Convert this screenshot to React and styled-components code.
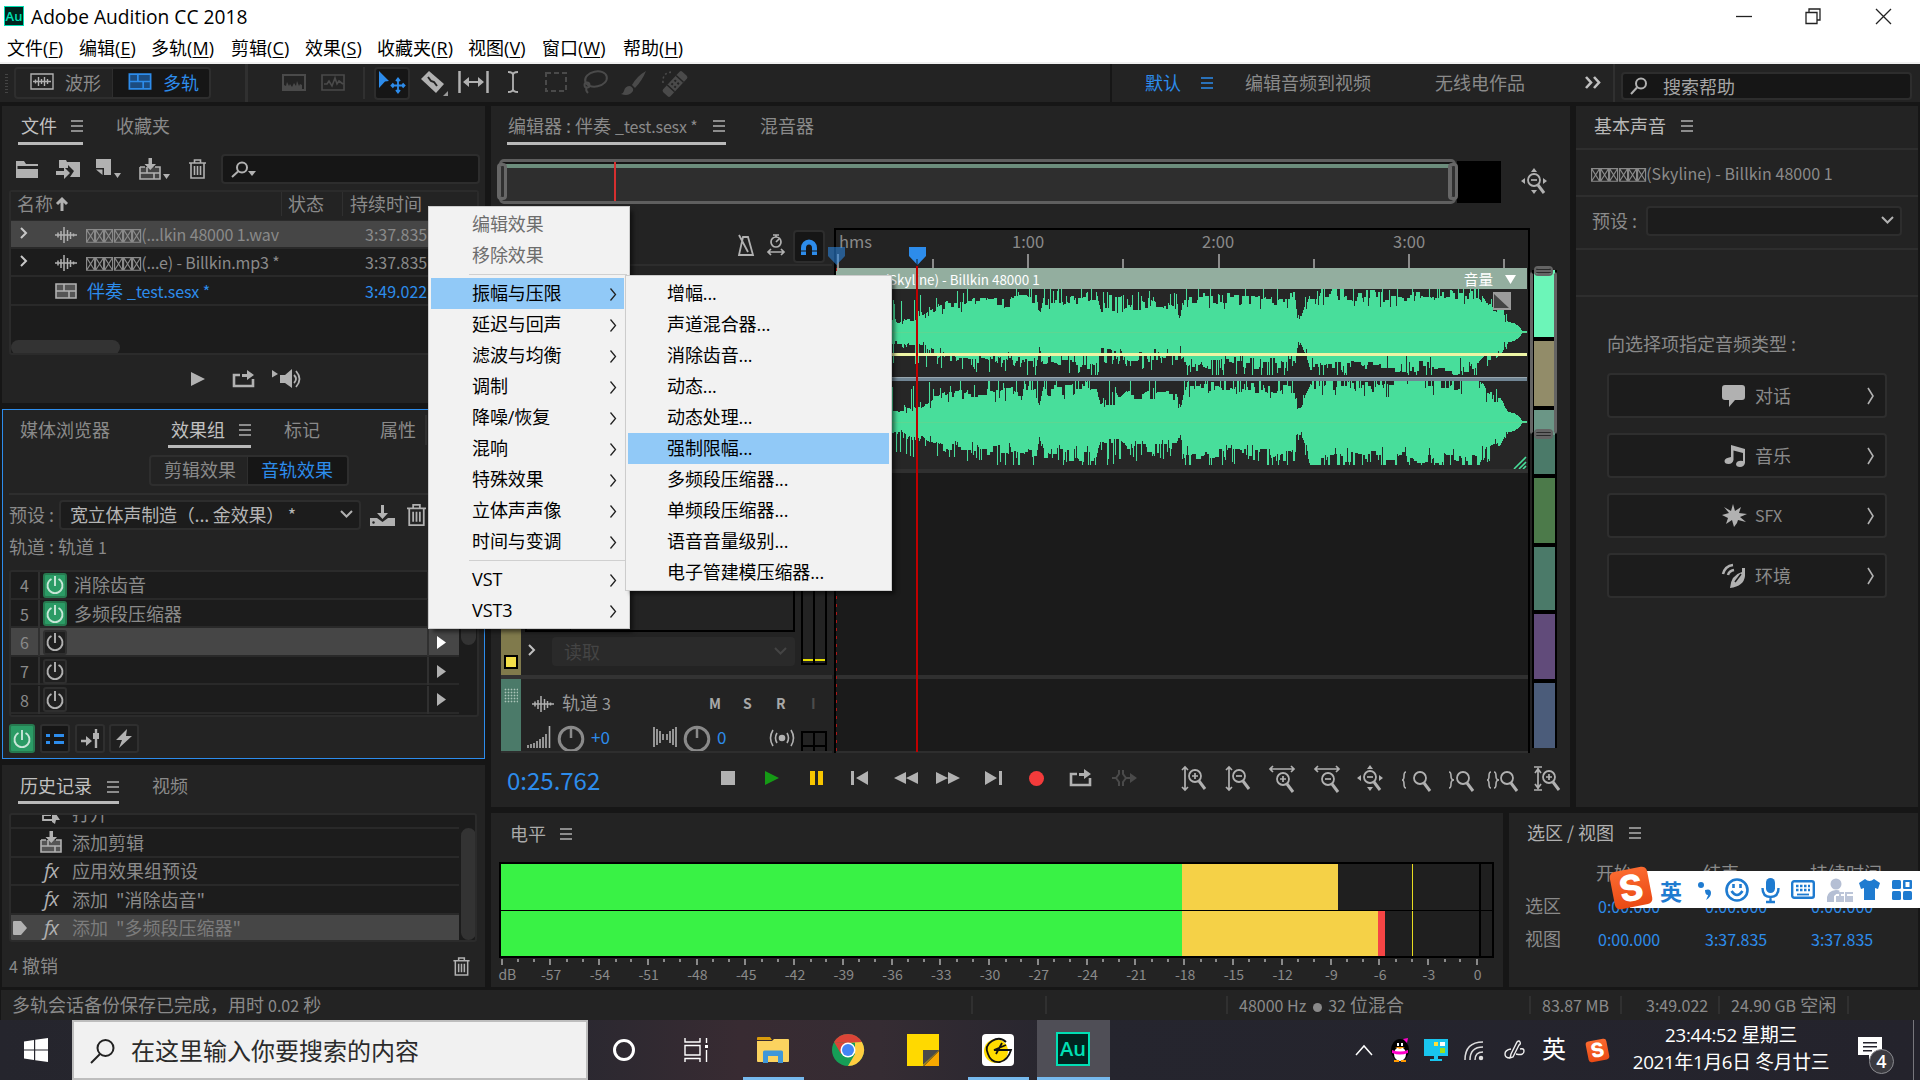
import React from 'react';
import styled, { createGlobalStyle, css } from 'styled-components';

const UI = '"Noto Sans CJK SC", sans-serif';
const WIN = '"Open Sans", "Noto Sans CJK SC", sans-serif';
const blue = '#2d8ceb';
const grey = '#8a8a8a';
const icon = '#b1b1b1';

const Global = createGlobalStyle`
  * { box-sizing: border-box; }
  html, body { margin: 0; padding: 0; background: #161616; overflow: hidden; }
  svg { display: block; flex: none; overflow: visible; }
`;

/* ---------- layout primitives ---------- */
const Screen = styled.div`
  width: 1920px; height: 1080px; position: relative; overflow: hidden;
  display: flex; flex-direction: column; background: #161616;
  font-family: ${UI}; font-size: 18px; line-height: 24px; color: ${grey}; white-space: nowrap;
`;
const columns = (xs) => xs.slice(1).map((x, i) => `${x - xs[i]}px`).concat('1fr').join(' ');
const Strip = styled.div`
  display: grid; align-items: center; flex: none;
  grid-template-columns: ${(p) => columns(p.$xs)};
  padding-left: ${(p) => p.$xs[0] - (p.$x0 || 0)}px;
  height: ${(p) => p.$h}px;
  margin-top: ${(p) => p.$mt || 0}px;
  & > * { min-width: 0; }
`;
const Gap = styled.div`height: ${(p) => p.$h}px; flex: none;`;
const Label = styled.span`
  color: ${(p) => p.$c || 'inherit'}; width: 0; overflow: visible;
  font-size: ${(p) => (p.$s ? `${p.$s}px` : 'inherit')};
  margin-left: -1px; margin-top: ${(p) => ((p.$dy || 0) - 1) * 2}px;
`;
const Latin = styled.span`font-size: ${(p) => p.$s || 16}px; letter-spacing: ${(p) => p.$ls || 0}px;`;
const Main = styled.div`display: flex; flex: none; height: 881px; padding: 0 2px; gap: 6px; margin-top: 4px;`;
const Column = styled.div`display: flex; flex-direction: column; gap: 6px; width: ${(p) => p.$w}px; flex: none;`;
const Line = styled.div`display: flex; gap: 6px; flex: none;`;
const Panel = styled.section`
  background: #232323; width: ${(p) => p.$w}px; height: ${(p) => p.$h}px; flex: none;
  display: flex; flex-direction: column; overflow: hidden;
  ${(p) => p.$active && css`box-shadow: inset 0 0 0 1px ${blue};`}
`;
const Rule = styled.div`height: 2px; background: #2e2e2e; flex: none; margin: ${(p) => p.$m || 0};`;
const Underline = styled.div`height: 3px; flex: none; background: #b9b9b9; width: ${(p) => p.$w}px; margin: ${(p) => p.$m};`;
const VRule = styled.i`display: block; width: ${(p) => p.$w || 2}px; height: ${(p) => p.$h || 18}px; background: ${(p) => p.$c || '#303030'};`;
const BoxBase = css`background: #161616; border: 2px solid #2d2d2d; border-radius: 4px;`;

/* ---------- small drawings ---------- */
const Svg = ({ w, h, c = icon, dy = 0, fill = 'none', sw = 2, children }) => (
  <svg width={w} height={h} viewBox={`0 0 ${w} ${h}`} fill={fill} stroke={fill === 'none' ? c : 'none'} color={c}
    strokeWidth={sw} transform={`translate(0 ${dy})`}>{children}</svg>
);
const Burger = ({ c = '#b0b0b0' }) => <Svg w={12} h={12} c={c} sw={1.6}><path d="M0 1h12M0 6h12M0 11h12" /></Svg>;
const Chevron = ({ c = icon, dy = 0 }) => <Svg w={8} h={12} c={c} dy={dy}><path d="M1 1l5 5-5 5" /></Svg>;
const Down = ({ c = icon }) => <Svg w={13} h={8} c={c}><path d="M1 1l5.5 5.5L12 1" /></Svg>;
const WaveIcon = () => <Svg w={22} h={16} sw={1.5} dy={1}><path d="M0 8h22M3 5.500v5M6 4v9M9 0v16M12.500 3v11M15.500 5v7M18.500 6.500v3" /></Svg>;
const Trash = ({ w = 17, h = 20 }) => (
  <svg width={w} height={h} viewBox="0 0 17 20" fill="none" stroke={icon} strokeWidth="1.6">
    <path d="M0 4h17M5.5 4V1h6v3M2 4v15h13V4M5.5 7v9M8.5 7v9M11.5 7v9" />
  </svg>
);
const Play = ({ c = icon, w = 14, h = 14 }) => <svg width={w} height={h} viewBox="0 0 14 14" preserveAspectRatio="none" fill={c}><path d="M0 0l14 7-14 7z" /></svg>;
const Loop = () => <Svg w={22} h={18}><path d="M7 5H1v11h19V9" strokeWidth="2.6" /><path d="M9 4h5V0l7 5-7 5V7H9z" fill={icon} stroke="none" /></Svg>;
const Grid = ({ c = icon, w = 22, h = 16, bg = '#555' }) => (
  <svg width={w} height={h} viewBox="0 0 22 16" fill={bg} stroke={c} strokeWidth="1.6"><path d="M1 1h20v14H1zM1 8h20M9 1v7M14 8v7" /></svg>
);
const AddClip = () => (
  <Svg w={22} h={22} sw={1.6}><path d="M1 9v12h20V9h-5M6 9H1M1 15h20M8 9v6M15 15v6" fill="#555" /><path d="M9.5 0h3.5v6h4l-5.7 6-5.8-6h4z" fill={icon} stroke="none" /></Svg>
);
const Power = ({ c = icon }) => <Svg w={18} h={20} c={c} sw={1.9}><path d="M5.5 4a7.5 7.5 0 1 0 7 0M9 1v10" /></Svg>;
const Mag = ({ c = icon, w = 18, h = 18 }) => (
  <svg width={w} height={h} viewBox="0 0 18 18" fill="none" stroke={c} strokeWidth="2"><circle cx="11" cy="6.5" r="5" /><path d="M7 10.5L1 17" /></svg>
);
const ZoomGlyph = ({ x = 0, y = 0, sign }) => (
  <g transform={`translate(${x} ${y})`}><circle cx="7" cy="8" r="6" strokeWidth="1.8" /><path d="M11 13l6 8" strokeWidth="3" />
    {sign && <path d={sign === '+' ? 'M4 8h6M7 5v6' : 'M4 8h6'} strokeWidth="1.7" />}</g>
);
const ZoomAll = () => (
  <Svg w={26} h={26}><ZoomGlyph x={6} y={4} sign="-" /><path d="M13 0l3 4h-6zM13 26l3-4h-6zM0 13l4-3v6zM26 13l-4-3v6z" fill={icon} stroke="none" /></Svg>
);
const Boxed = styled.span`display: inline-flex; gap: 0; vertical-align: -2px;`;
const Tofu = ({ c = 'currentColor', n = 6, w = 9.2, h = 14 }) => (
  <Boxed>{Array.from({ length: n }, (_, i) => (
    <svg key={i} width={w} height={h} viewBox="0 0 9.2 14" preserveAspectRatio="none" fill="none" stroke={c} strokeWidth="1.15"><path d="M.6.6h8v12.6h-8zM.6.6l8 12.6M8.6.6l-8 12.6" /></svg>
  ))}</Boxed>
);

/* ---------- window chrome ---------- */
const TitleBar = styled(Strip)`background: #fff; color: #000; font-family: ${WIN}; font-size: 19.2px;`;
const MenuBar = styled(Strip)`background: #fff; color: #000; font-family: ${WIN}; font-size: 18px; border-bottom: 2px solid #f0f0f0;`;
const MenuLatin = styled.span`font-size: 18px; letter-spacing: 0.1px; u { text-underline-offset: 2px; text-decoration-thickness: 1px; }`;
const AuBadge = styled.div`
  width: ${(p) => p.$s}px; height: ${(p) => p.$s}px; background: #00241f; border: ${(p) => p.$b}px solid #00e0b4; color: #00e0b4;
  font: 600 ${(p) => p.$f}px/1 ${WIN}; display: flex; align-items: center; justify-content: center; margin-left: ${(p) => p.$ml || 0}px; margin-top: ${(p) => p.$mt || 0}px;
`;
const menus = [['文件', 'F'], ['编辑', 'E'], ['多轨', 'M'], ['剪辑', 'C'], ['效果', 'S'], ['收藏夹', 'R'], ['视图', 'V'], ['窗口', 'W'], ['帮助', 'H']];

/* ---------- tool bar ---------- */
const ToolBar = styled.div`display: flex; background: #232323; height: 38px; flex: none; align-items: center;`;
const Grip = styled.div`width: 3px; height: 19px; margin-left: 5px; background: repeating-linear-gradient(#444 0 1px, transparent 1px 3px);`;
const Toggle = styled.div`display: flex; height: ${(p) => p.$h}px; border: 2px solid #2e2e2e; border-radius: 4px; margin-left: ${(p) => p.$ml}px; width: ${(p) => p.$w}px; overflow: hidden; flex: none;`;
const ToggleItem = styled.div`
  flex: none; width: ${(p) => p.$w}px; padding: 0 0 3px ${(p) => p.$pl}px; display: flex; align-items: center; gap: 11px;
  color: ${(p) => (p.$on ? blue : grey)}; background: ${(p) => (p.$on ? '#161616' : 'transparent')};
  border-left: ${(p) => (p.$on ? '1px solid #2e2e2e' : 'none')};
`;
const ToolSlot = styled.div`
  width: ${(p) => p.$w}px; height: ${(p) => p.$h || 33}px; margin-left: ${(p) => p.$ml || 0}px; display: flex; align-items: center; justify-content: center; flex: none;
  ${(p) => p.$on && BoxBase}
`;
const HelpSearch = styled.div`${BoxBase} width: 291px; height: 28px; margin: 5px 0 0 6px; display: flex; align-items: center; gap: 15px; padding-left: 7px; color: #a5a5a5;`;
const off = '#4a4a4a';

/* ---------- left panels ---------- */
const FindBox = styled.div`${BoxBase} width: 259px; height: 30px; padding: 5px 0 0 8px;`;
const Table = styled.div`
  margin-left: ${(p) => p.$ml}px; width: ${(p) => p.$w}px; height: ${(p) => p.$h}px; background: #1c1c1c; border: 2px solid #2b2b2b; border-radius: 3px;
  display: flex; flex-direction: column; overflow: hidden; flex: none; position: relative;
`;
const FileHead = styled(Strip)`background: #232323; border-bottom: 1px solid #2b2b2b; padding-bottom: 4px;`;
const Row = styled(Strip)`
  background: ${(p) => (p.$on ? '#464646' : 'transparent')}; border-bottom: 2px solid #292929; color: ${(p) => p.$c || grey};
`;
const Thumb = styled.div`background: #333; border-radius: 8px; width: ${(p) => p.$w}px; height: ${(p) => p.$h}px; margin: ${(p) => p.$m || 0}; flex: none;`;
const Preset = styled.div`${BoxBase} background: #1c1c1c; width: ${(p) => p.$w}px; height: 30px; display: flex; align-items: center; justify-content: space-between; padding: 0 6px 3px 9px; color: ${(p) => p.$c || '#b5b5b5'}; letter-spacing: -0.2px;`;
const Scroller = styled.div`display: flex; height: 100%;`;
const Rows = styled.div`width: 448px; flex: none; overflow: hidden; margin-top: ${(p) => p.$mt || 0}px;`;
const Rack = styled(Row)`border-bottom: none; box-shadow: inset 0 -2px #292929;`;
const PowerBox = styled.div`
  width: ${(p) => p.$w || 24}px; height: ${(p) => p.$h || 25}px; border-radius: 3px; display: flex; align-items: center; justify-content: center;
  background: ${(p) => (p.$on ? '#2b9b65' : p.$dark ? '#161616' : '#1f1f1f')}; border: 2px solid ${(p) => (p.$on ? '#26794f' : '#2f2f2f')};
`;
const Fx = styled.span`font: italic 20px/22px "Open Sans", sans-serif; color: ${icon}; letter-spacing: -1px; width: 0;`;

/* ---------- editor ---------- */
const Overview = styled.div`
  position: relative; display: flex; align-items: center; width: 1005px; height: 46px; margin: 13px 0 0 6px; flex: none;
`;
const OverviewFrame = styled.div`flex: none; width: 957px; height: 45px; margin-left: -8px; border: 3px solid #5f5f5f; border-radius: 5px; background: linear-gradient(#161616 0 2px, #6c8d7c 2px 6px, #2e2e2e 6px);`;
const Handle = styled.div`flex: none; width: 10px; height: 37px; background: #303030; border: 3px solid #676767; border-radius: 4px; margin-left: ${(p) => p.$ml}px; box-shadow: inset 1px 0 #676767; z-index: 1;`;
const BlackEnd = styled.div`width: 44px; height: 42px; background: #000; margin-left: -1px; flex: none;`;
const OverviewHead = styled.i`position: absolute; left: 117px; top: 3px; width: 2px; height: 39px; background: #d62f2f;`;
const ZoomCell = styled.div`padding-top: 11px;`;
const EditorGrid = styled.div`display: grid; grid-template-columns: 10px 333px 696px 40px; height: 525px; flex: none; margin-top: 23px; position: relative;`;
const Headers = styled.div`grid-column: 2; display: flex; flex-direction: column; background: #232323; padding-right: 2px; overflow: hidden;`;
const TrackHead = styled.div`display: flex; height: ${(p) => p.$h}px; margin-bottom: ${(p) => p.$mb || 0}px; flex: none; overflow: hidden; border-top: ${(p) => p.$bt || 0}px solid #333;`;
const TrackTag = styled.div`width: 20px; background: ${(p) => p.$c}; flex: none; display: flex; flex-direction: column; align-items: center; justify-content: ${(p) => p.$j || 'flex-start'}; padding: ${(p) => p.$p || 0};`;
const Swatch = styled.i`width: 14px; height: 14px; background: #f3df49; border: 2px solid #000;`;
const Dots = styled.i`width: 14px; height: 15px; background: radial-gradient(#aac4b8 40%, transparent 50%) 0 0 / 3px 3px;`;
const TrackBody = styled.div`width: 280px; display: flex; flex-direction: column; flex: none;`;
const SendBox = styled.div`width: 270px; height: ${(p) => p.$h}px; margin-left: 4px; border: 2px solid #000; flex: none; background: linear-gradient(90deg, transparent 43px, #000 43px 44px, transparent 44px);`;
const ReadBox = styled.div`width: 243px; height: 29px; background: #2a2a2a; border-radius: 4px; color: #444; display: flex; justify-content: space-between; align-items: center; padding: 0 8px 0 12px;`;
const Meter = styled.div`
  width: 26px; height: ${(p) => p.$h}px; margin-top: ${(p) => p.$mt}px; border: 2px solid #000; flex: none; display: flex; flex-direction: column; justify-content: flex-end;
  background: linear-gradient(90deg, transparent 10px, #000 10px 12px, transparent 12px);
  &::after { content: ''; display: block; height: 2px; margin-bottom: ${(p) => (p.$lit ? 2 : 6)}px; background: ${(p) => (p.$lit ? 'linear-gradient(90deg, #e8e000 10px, #000 10px 12px, #e8e000 12px)' : '#000')}; }
`;
const Lanes = styled.div`grid-column: 3; display: flex; flex-direction: column; border-left: 2px solid #000; border-right: 2px solid #000; background: #1b1b1b;`;
const Ruler = styled.div`height: 40px; background: #232323; border-top: 2px solid #000; flex: none;`;
const ClipBar = styled.div`height: 21px; background: #93ae9f; color: #fff; flex: none; display: flex; align-items: center; justify-content: space-between; padding: 0 11px 0 3px; font-size: 14.6px; margin-right: 1px;`;
const ClipName = styled.span`font-size: 13.4px; padding-top: 1px;`;
const VolTag = styled.span`display: flex; align-items: center; gap: 12px; padding-top: 1px;`;
const Clip = styled.div`height: 180px; background: #262626; flex: none;`;
const Lane = styled.div`height: ${(p) => p.$h}px; border-top: 4px solid #303030; flex: none;`;
const MapCol = styled.div`grid-column: 4; position: relative; padding: 42px 0 0 2px;`;
const MapTrack = styled.div`width: 25px; background: #000; padding: 0 2px; display: flex; flex-direction: column; gap: 4px;`;
const MapSeg = styled.i`height: ${(p) => p.$h}px; background: ${(p) => p.$c}; display: block;`;
const MapFrame = styled.div`position: absolute; left: 0; top: 43px; width: 27px; height: 164px; border: 3px solid #646464; border-top-color: transparent; border-bottom-color: transparent; border-radius: 4px;`;
const MapCap = styled.i`position: absolute; left: 4px; top: ${(p) => p.$t}px; width: 19px; height: 10px; background: linear-gradient(transparent 1px, #2a2a2a 1px 2px, transparent 2px 4px, #2a2a2a 4px 5px, transparent 5px) #646464; background-clip: padding-box; border: 2px solid #646464; border-radius: 4px;`;
const Playhead = styled.i`position: absolute; left: 425px; top: 38px; width: 2px; height: 486px; background: #c00000; z-index: 2;`;
const StartLine = styled.i`position: absolute; left: 345px; top: 40px; width: 1px; height: 484px; background: repeating-linear-gradient(#b01818 0 3px, transparent 3px 8px);`;
const Marker = styled.svg`position: absolute; left: ${(p) => p.$l}px; top: 19px; opacity: ${(p) => p.$o || 1};`;
const TimeCode = styled.span`font-size: 24px; letter-spacing: 0; color: ${blue}; width: 0; padding-top: 4px;`;
const RulerTools = styled(Strip)`border-bottom: 2px solid #2d2d2d;`;
const MsrLabel = styled.span`font: 600 14px/18px "Noto Sans CJK SC", sans-serif; color: ${(p) => p.$c || '#a8a8a8'}; width: 0;`;

/* ---------- level meter ---------- */
const LevelBox = styled.div`width: 995px; height: 96px; margin: 10px 0 0 8px; border: 2px solid #000; display: flex; flex-direction: column; gap: 1px; background: #000; flex: none;`;
const Level = styled.div`flex: 1; display: flex; background: #1f1f1f;`;
const Bar = styled.i`display: block; width: ${(p) => p.$w}px; background: ${(p) => p.$c}; margin-left: ${(p) => p.$ml || 0}px; flex: none;`;
const Scale = styled.div`display: flex; margin-left: -14px; flex: none;`;
const Mark = styled.div`width: 48.77px; flex: none; text-align: center; font-size: 14px; line-height: 18px; padding: 7px 0 0 ${(p) => (p.$first ? 12 : 2)}px;
  background: linear-gradient(${grey}, ${grey}) 23.5px 1px / 2px 6px no-repeat, ${(p) => (p.$last ? 'none' : `linear-gradient(${grey}, ${grey}) 40px 1px / 2px 3px no-repeat`)}, ${(p) => (p.$first ? 'none' : `linear-gradient(${grey}, ${grey}) 7px 1px / 2px 3px no-repeat`)};`;

/* ---------- right panel ---------- */
const TypeButton = styled.div`
  width: 280px; height: 45px; margin: 0 0 15px 31px; border: 2px solid #2e2e2e; border-radius: 4px; background: #1c1c1c; flex: none;
  display: grid; grid-template-columns: 113px 34px 1fr 18px; align-items: center;
`;
const Figures = styled(Strip)`color: ${blue};`;

/* ---------- status and task bars ---------- */
const StatusBar = styled(Strip)`background: #232323; margin-top: 3px; margin-left: 1px;`;
const Bullet = styled.i`display: inline-block; width: 9px; height: 9px; border-radius: 50%; background: currentColor; margin: 0 6px 0 7px;`;
const TaskBar = styled.div`height: 60px; flex: none; display: flex; background: linear-gradient(90deg, #25252d 0, #292830 560px, #382b32 740px, #352c33 880px, #25252e 1080px, #24232c 100%); color: #fff; font-family: ${WIN};`;
const StartCell = styled.div`width: 72px; display: flex; align-items: center; justify-content: center; flex: none;`;
const SearchBox = styled.div`width: 516px; background: #f1f1f1; border: 2px solid #bdbdbd; display: flex; align-items: center; gap: 17px; padding: 2px 0 0 16px; color: #2b2b2b; font-size: 24px; flex: none;`;
const AppCell = styled.div`width: ${(p) => p.$w}px; margin-left: ${(p) => p.$ml || 0}px; display: flex; align-items: center; justify-content: center; background: ${(p) => (p.$on ? '#4f4e56' : 'transparent')}; box-shadow: ${(p) => (p.$run ? 'inset 0 -3px #76b9ed' : 'none')}; flex: none;`;
const Tray = styled(Strip)`flex: 1;`;
const Clock = styled.div`width: 204px; text-align: center; font-size: 18.8px; line-height: 27px; letter-spacing: -0.3px; margin-top: -2px;`;
const Badge = styled.div`position: absolute; left: 1869px; top: 1049px; width: 25px; height: 25px; border-radius: 50%; border: 1.5px solid #8b8b90; background: #3a3a40; color: #fff; font: 600 18px/22px ${WIN}; text-align: center;`;

/* ---------- menus ---------- */
const Popup = styled.div`
  position: absolute; left: ${(p) => p.$l}px; top: ${(p) => p.$t}px; width: ${(p) => p.$w}px; height: ${(p) => p.$h}px; background: #f2f2f2; border: 1px solid #ccc;
  padding: 2px; box-shadow: 4px 4px 4px -1px rgba(0,0,0,.5); z-index: ${(p) => p.$z}; color: #000; font-family: ${WIN};
`;
const Item = styled.div`
  height: 31px; padding: 0 ${(p) => p.$pr || 7}px 1px ${(p) => p.$pl}px; display: flex; align-items: center; justify-content: space-between;
  color: ${(p) => (p.$off ? '#6d6d6d' : '#000')}; background: ${(p) => (p.$on ? '#91c9f7' : 'transparent')};
  margin-right: ${(p) => p.$mr || 0}px; letter-spacing: -0.1px;
`;
const Sep = styled.div`height: 1px; background: #d0d0d0; margin: ${(p) => p.$m};`;

/* ---------- input method bar ---------- */
const ImeBar = styled.div`position: absolute; left: 1630px; top: 871px; width: 290px; height: 37px; background: #fff; color: #1f7bd0; z-index: 5;`;
const ImeRow = styled(Strip)`font: 700 22px/30px ${UI};`;
const SLogo = styled.div`
  width: ${(p) => p.$w}px; height: ${(p) => p.$h}px; background: linear-gradient(#fb6a30, #ea4a14); border-radius: ${(p) => p.$w / 7}px; transform: rotate(-11deg);
  font: 800 ${(p) => p.$w * 0.95}px/${(p) => p.$h}px "Inter", sans-serif; text-align: center; color: #fff;
  ${(p) => p.$float && css`position: absolute; left: 1612px; top: 869px; z-index: 6;`}
`;

/* ---------- data ---------- */
const env = [[836, 12], [900, 12], [922, 16], [932, 23], [948, 30], [1000, 31], [1036, 36], [1039, 16], [1043, 34], [1060, 35], [1096, 38], [1100, 22], [1120, 22], [1128, 29], [1176, 28], [1180, 14], [1184, 38], [1230, 35], [1294, 36], [1297, 13], [1301, 15], [1306, 28], [1310, 42], [1380, 38], [1430, 40], [1478, 43], [1486, 30], [1500, 24], [1504, 16], [1508, 10], [1514, 9], [1519, 5], [1522, 1], [1527, 0.5]];
const level = (x) => {
  let i = 1;
  while (i < env.length - 1 && env[i][0] < x) i += 1;
  const [x0, a] = env[i - 1]; const [x1, b] = env[i];
  return a + ((b - a) * (x - x0)) / (x1 - x0);
};
const wave = (mid, seed, lowScale) => {
  let s = seed;
  const rnd = () => { s = (s * 48271) % 2147483647; return s / 2147483647; };
  const side = (k) => {
    let drift = 1;
    const out = [];
    for (let x = 836; x < 1527; x += 1) {
      const e = level(x);
      if (x > 1506) { out.push(e); continue; }
      if (rnd() > 0.6) drift = 0.76 + rnd() * 0.36;
      const r = rnd();
      let amp = e * drift;
      if (r > 0.88) amp = e * (1.15 + rnd() * 0.3);
      if (r < 0.04) amp = e * 0.66;
      if (x < 930 && rnd() > 0.86) amp += 20;
      if (x > 1100 && x < 1124 && rnd() > 0.72) amp += 16;
      out.push(Math.min(43, amp * k));
    }
    return out;
  };
  const up = side(1);
  const down = side(lowScale);
  return up.map((a, i) => `M${i + 0.5} ${Math.round(mid - a)}V${Math.round(mid + down[i])}`).join('');
};
const WAVE_A = wave(43, 4711, 0.93);
const WAVE_B = wave(133, 90210, 0.98);

const files = [
  { name: '(...lkin 48000 1.wav', time: '3:37.835', on: true },
  { name: '(...e) - Billkin.mp3 *', time: '3:37.835' },
];
const rack = [[4, '消除齿音', true], [5, '多频段压缩器', true], [6, ''], [7, ''], [8, '']];
const mainMenu = ['延迟与回声', '滤波与均衡', '调制', '降噪/恢复', '混响', '特殊效果', '立体声声像', '时间与变调'];
const subMenu = ['增幅...', '声道混合器...', '消除齿音...', '动态...', '动态处理...', '强制限幅...', '多频段压缩器...', '单频段压缩器...', '语音音量级别...', '电子管建模压缩器...'];
const segs = [[67, '#6cf5b8'], [65, '#928c69'], [64, 'linear-gradient(#6b9686 25px, #4b7a69 25px)'], [65, '#4c7a4a'], [63, '#4b7a69'], [65, '#614b7a'], [65, '#4b5c7a']];

const Knob = () => <Svg w={28} h={26} sw={3}><circle cx="14" cy="14" r="11.8" stroke="#8a8a8a" /><path d="M14 3v10" stroke="#8a8a8a" strokeWidth="2.5" /></Svg>;
const MenuArrow = () => <Svg w={7} h={13} c="#222" sw={1.3} dy={1}><path d="M.5.5l5 6-5 6" /></Svg>;

function TopBars() {
  return (
    <>
      <TitleBar $xs={[4, 32, 1736, 1805, 1876]} $h={32}>
        <AuBadge $s={20} $b={1.5} $f={13}>Au</AuBadge>
        <Label $dy={1.8}>Adobe Audition CC 2018</Label>
        <Svg w={16} h={16} c="#222" sw={1.3}><path d="M0 8.5h16" /></Svg>
        <Svg w={16} h={16} c="#222" sw={1.3}><path d="M1 4.5h11v11H1zM4 4V1h11v11h-3" /></Svg>
        <Svg w={16} h={16} c="#222" sw={1.3}><path d="M0 1l15 15M15 1L0 16" /></Svg>
      </TitleBar>
      <MenuBar $xs={[8, 80, 152, 232, 306, 378, 469, 543, 624]} $h={32}>
        {menus.map(([t, k]) => <Label key={k} $dy={2}>{t}<MenuLatin>(<u>{k}</u>)</MenuLatin></Label>)}
      </MenuBar>
      <ToolBar>
        <Grip />
        <Toggle $h={32} $ml={6} $w={197}>
          <ToggleItem $w={96} $pl={14}><Svg w={24} h={17} sw={1.4}><path d="M1 1h22v15H1zM3 8.500h18M5.500 6.500v4M8.500 4v9M11.500 6v5M14.500 4v9M17.500 6v5" /></Svg>波形</ToggleItem>
          <ToggleItem $w={99} $pl={15} $on><Grid c={blue} bg="#1c4c80" w={24} h={17} />多轨</ToggleItem>
        </Toggle>
        <ToolSlot $w={3} $ml={34}><VRule $h={38} $w={3} /></ToolSlot>
        <ToolSlot $w={24} $ml={34} $h={36}><Svg w={24} h={17} c={off} dy={-1}><path d="M1 1h22v15H1z" /><path d="M2 16v-5l2 1 1-4 2 4 1-2 2 3 2-4 2 3 1-5 2 5 1-2 2 1v5z" fill={off} stroke="none" /></Svg></ToolSlot>
        <ToolSlot $w={24} $ml={15}><Svg w={24} h={17} c={off} sw={1.6} dy={-1}><path d="M1 1h22v15H1zM3 10h3l2-3 3 5 3-8 2 6 2-3 4 3" /></Svg></ToolSlot>
        <ToolSlot $w={2} $ml={18}><VRule $h={32} /></ToolSlot>
        <ToolSlot $w={36} $ml={9} $on>
          <Svg w={26} h={22} c={blue} dy={-1}><path d="M0 0l10 10-4 .5L0 17z" fill={blue} stroke="none" /><path d="M19 8v13M12.5 14.5h13M17 10l2-2.5 2 2.5M17 19l2 2.5 2-2.5M14.5 12.5l-2 2 2 2M23.5 12.5l2 2-2 2" strokeWidth="1.8" /></Svg>
        </ToolSlot>
        <ToolSlot $w={30} $ml={9}><Svg w={28} h={26}><path d="M9 1l15 13-8 9L1 9z" fill={icon} stroke="none" /><path d="M8 7l3 4 3 1 3 4" stroke="#232323" /><path d="M28 21v5h-5z" fill="#999" stroke="none" /></Svg></ToolSlot>
        <ToolSlot $w={32} $ml={8}><Svg w={31} h={22} dy={-1}><path d="M1.5 0v22M29.5 0v22" strokeWidth="2.5" /><path d="M6 11h19" /><path d="M5 11l6-5v10zM26 11l-6-5v10z" fill={icon} stroke="none" /></Svg></ToolSlot>
        <ToolSlot $w={12} $ml={18}><Svg w={12} h={22} sw={1.8} dy={-1}><path d="M1 1q5 0 5 3v14q0 3-5 3M11 1q-5 0-5 3M11 21q-5 0-5-3" /></Svg></ToolSlot>
        <ToolSlot $w={22} $ml={26}><Svg w={22} h={20} c={off} dy={-1}><path d="M1 1h20v18H1z" strokeDasharray="5 3" /></Svg></ToolSlot>
        <ToolSlot $w={26} $ml={15}><Svg w={26} h={24} c={off} sw={2} dy={-1}><ellipse cx="14" cy="9" rx="11" ry="7.5" transform="rotate(-12 14 9)" /><circle cx="5" cy="15" r="2.5" /><path d="M5 17q-2 3 1 6" /></Svg></ToolSlot>
        <ToolSlot $w={26} $ml={13}><Svg w={26} h={24} c={off}><path d="M25 0q-9 5-14 14l3 3Q21 10 25 0zM9 15q-5 0-6 5-1 3-3 3 8 3 12-3 1-3-3-5z" fill={off} stroke="none" /></Svg></ToolSlot>
        <ToolSlot $w={28} $ml={14}><Svg w={26} h={24} c={off}><g transform="rotate(-47 13 13)"><rect x="-1" y="8" width="28" height="10" rx="2" fill={off} stroke="none" /><path d="M7 8v10M20 8v10" stroke="#232323" strokeWidth="1.5" /><path d="M10 11h7M10 15h7" stroke="#232323" strokeWidth="2" strokeDasharray="2 2.5" /></g><path d="M1 12Q0 1 11 1" strokeDasharray="2 2.5" strokeWidth="1.6" /></Svg></ToolSlot>
        <Strip $xs={[1111, 1147, 1202, 1247, 1437, 1586, 1614]} $x0={690} $h={38}>
          <VRule $h={38} $c="#161616" />
          <Label $dy={-0.3} $c={blue}>默认</Label>
          <Burger c={blue} />
          <Label $dy={-0.3}>编辑音频到视频</Label>
          <Label $dy={-0.3}>无线电作品</Label>
          <Svg w={16} h={13} sw={2.6} c="#c0c0c0" dy={-1}><path d="M1 1l5 5.5-5 5.5M9 1l5 5.5-5 5.5" /></Svg>
          <VRule $h={38} />
        </Strip>
        <HelpSearch><Mag />搜索帮助</HelpSearch>
      </ToolBar>
    </>
  );
}

function FilesPanel() {
  return (
    <Panel $w={483} $h={297}>
      <Strip $xs={[22, 71, 117]} $x0={2} $h={36} $mt={2}>
        <Label $c="#c0c0c0">文件</Label><Burger /><Label>收藏夹</Label>
      </Strip>
      <Underline $w={65} $m="-2px 0 0 16px" />
      <Strip $xs={[16, 56, 96, 139, 189, 221]} $x0={2} $h={30} $mt={9}>
        <Svg w={22} h={17} fill={icon} c={icon}><path d="M0 0h8l2 3h12v2H1.5v3H22v9H0z" /></Svg>
        <Svg w={25} h={19} fill={icon} c={icon}><path d="M3 0h7l1 2h13v15H14l4-6-6-6v3H3zM0 11h8V7l6 6-6 6v-4H0z" /></Svg>
        <Svg w={26} h={20} fill={icon} c={icon}><path d="M0 0h15v16H8V9H0zM0 10.5h6.5V16zM18 14h7l-3.5 5z" /></Svg>
        <Svg w={31} h={22} sw={1.6}><path d="M1 9v12h20V9h-5M6 9H1M1 15h20M8 9v6M15 15v6" fill="#444" /><path d="M9.5 0h3.5v6h4l-5.7 6-5.8-6h4zM24 16h7l-3.5 5z" fill={icon} stroke="none" /></Svg>
        <Trash />
        <FindBox><Svg w={26} h={17}><circle cx="11" cy="6.5" r="5" /><path d="M7 10.5L1 16" /><path d="M17 10h8l-4 5z" fill={icon} stroke="none" /></Svg></FindBox>
      </Strip>
      <Gap $h={6} />
      <Table $ml={7} $w={470} $h={165}>
        <FileHead $xs={[18, 56, 281, 289, 342, 351]} $x0={11} $h={29}>
          <Label>名称</Label><Svg w={12} h={14}><path d="M6 14V2M1 7l5-5 5 5" strokeWidth="3" /></Svg>
          <VRule $h={24} $w={1} /><Label>状态</Label><VRule $h={24} $w={1} /><Label>持续时间</Label>
        </FileHead>
        {files.map((f) => (
          <Row key={f.name} $xs={[20, 55, 87, 366]} $x0={11} $h={28} $on={f.on}>
            <Chevron c="#c8c8c8" dy={-1} /><WaveIcon /><Label $dy={0.5}><Tofu /><Latin $ls={-0.15}>{f.name}</Latin></Label><Label $dy={0.5}><Latin>{f.time}</Latin></Label>
          </Row>
        ))}
        <Row $xs={[55, 88, 366]} $x0={11} $h={29} $c={blue}>
          <Grid /><Label $dy={1}>伴奏 <Latin $ls={-0.1}>_test.sesx *</Latin></Label><Label $dy={1}><Latin>3:49.022</Latin></Label>
        </Row>
        <Thumb $w={109} $h={15} $m="34px 0 0 0" />
      </Table>
      <Strip $xs={[191, 233, 272]} $x0={2} $h={36} $mt={6}>
        <Play /><Loop />
        <Svg w={31} h={20}><path d="M0 1l6 4-6 3.5zM8 6h5l7-6v19l-7-5H8z" fill={icon} stroke="none" /><path d="M22 6q4 4 0 8M24 2q7 8 0 16" strokeWidth="1.8" /></Svg>
      </Strip>
    </Panel>
  );
}

function RackPanel() {
  return (
    <Panel $w={483} $h={350} $active>
      <Strip $xs={[21, 172, 239, 285, 381, 425]} $x0={2} $h={36} $mt={3}>
        <Label $dy={-0.3}>媒体浏览器</Label><Label $dy={-0.3} $c="#c0c0c0">效果组</Label><Burger /><Label $dy={-0.3}>标记</Label><Label $dy={-0.3}>属性</Label><VRule $h={30} />
      </Strip>
      <Underline $w={83} $m="-3px 0 0 166px" />
      <Gap $h={7} />
      <Toggle $h={31} $ml={147} $w={200}>
        <ToggleItem $w={96} $pl={13}>剪辑效果</ToggleItem><ToggleItem $w={101} $pl={13} $on>音轨效果</ToggleItem>
      </Toggle>
      <Rule $m="7px 6px 0 7px" />
      <Strip $xs={[10, 59, 370, 407]} $x0={2} $h={40}>
        <Label>预设 :</Label><Preset $w={302}>宽立体声制造（... 金效果） *<Down /></Preset>
        <Svg w={25} h={21} fill={icon} c={icon}><path d="M11 0h3v8h4l-5.5 6L7 8h4zM0 13h7l5.5 4 5.5-4h7v8H0z" /><circle cx="3.5" cy="17.5" r="1.2" fill="#232323" /></Svg>
        <Trash w={19} h={24} />
      </Strip>
      <Strip $xs={[10]} $x0={2} $h={26}><Label $dy={-0.3}>轨道 : 轨道 <Latin>1</Latin></Label></Strip>
      <Gap $h={9} />
      <Table $ml={7} $w={470} $h={147}>
        <Scroller>
          <Rows $mt={-1}>
            {rack.map(([n, t, on]) => (
              <Rack key={n} $xs={[21, 38, 43, 75, 427, 437]} $x0={11} $h={28.6} $on={n === 6}>
                <Label $dy={0.5}><Latin>{n}</Latin></Label><VRule $h={28} /><PowerBox $on={on}><Power c={on ? '#c9e6d8' : icon} /></PowerBox><Label>{t}</Label>
                <VRule $h={28} /><Play w={9} h={13} c={n === 6 ? '#fff' : icon} />
              </Rack>
            ))}
          </Rows>
          <Thumb $w={15} $h={73} $m="0 0 0 2px" />
        </Scroller>
      </Table>
      <Strip $xs={[9, 40, 75, 109]} $x0={2} $h={29} $mt={7}>
        <PowerBox $on $w={26} $h={29}><Power c="#c9e6d8" /></PowerBox>
        <PowerBox $dark $w={30} $h={29}><Svg w={18} h={12} c={blue} sw={3}><path d="M0 2.5h4M8 2.5h10M0 9.5h4M8 9.5h10" /></Svg></PowerBox>
        <PowerBox $w={30} $h={29}><Svg w={19} h={19} sw={2.4}><path d="M0 12h6M15 0v19" /><path d="M5 7l6 5-6 5zM12 4h6v6h-6z" fill={icon} stroke="none" /></Svg></PowerBox>
        <PowerBox $w={30} $h={29}><Svg w={16} h={19} fill={icon}><path d="M11 0L0 11h6l-3 8L16 7h-6z" /></Svg></PowerBox>
      </Strip>
    </Panel>
  );
}

function HistoryPanel() {
  return (
    <Panel $w={483} $h={222}>
      <Strip $xs={[21, 107, 153]} $x0={2} $h={36} $mt={4}>
        <Label $dy={-1} $c="#c0c0c0">历史记录</Label><Burger /><Label $dy={-1}>视频</Label>
      </Strip>
      <Underline $w={101} $m="-4px 0 0 16px" />
      <Gap $h={9} />
      <Table $ml={7} $w={468} $h={129}>
        <Scroller>
          <Rows $mt={-15}>
            <Row $xs={[42, 73]} $x0={11} $h={29}><Svg w={18} h={20} sw={1.8}><path d="M11 2H1v14h10M1 11h8" /><path d="M10 4l8 12h-4l-1 4-3-2z" fill={icon} stroke="none" /></Svg><Label>打开</Label></Row>
            <Row $xs={[40, 73]} $x0={11} $h={28.5}><AddClip /><Label $dy={1}>添加剪辑</Label></Row>
            <Row $xs={[44, 73]} $x0={11} $h={28.5}><Fx>fx</Fx><Label $dy={0.5}>应用效果组预设</Label></Row>
            <Row $xs={[44, 73]} $x0={11} $h={28.5}><Fx>fx</Fx><Label $dy={0.5}>添加&nbsp; "消除齿音"</Label></Row>
            <Row $xs={[13, 44, 73]} $x0={11} $h={28} $on><Svg w={14} h={14} fill={icon}><path d="M0 1q0-1 1-1h7l6 7-6 7H1q-1 0-1-1z" /></Svg><Fx>fx</Fx><Label $dy={0.5} $c="#7c7c7c">添加&nbsp; "多频段压缩器"</Label></Row>
          </Rows>
          <Thumb $w={15} $h={112} $m="13px 0 0 2px" />
        </Scroller>
      </Table>
      <Strip $xs={[10, 453]} $x0={2} $h={40} $mt={4}><Label $dy={0.5}><Latin>4</Latin> 撤销</Label><Trash w={17} h={19} /></Strip>
    </Panel>
  );
}

function Editor() {
  return (
    <Panel $w={1079} $h={701}>
      <Strip $xs={[509, 713, 761]} $x0={491} $h={36} $mt={2}>
        <Label>编辑器 : 伴奏 <Latin $ls={-0.15}>_test.sesx *</Latin></Label><Burger /><Label>混音器</Label>
      </Strip>
      <Underline $w={219} $m="-2px 0 0 16px" />
      <Strip $xs={[491, 1521]} $x0={491} $h={60}>
        <Overview><Handle $ml={0} /><OverviewFrame /><Handle $ml={-8} /><BlackEnd /><OverviewHead /></Overview>
        <ZoomCell><ZoomAll /></ZoomCell>
      </Strip>
      <EditorGrid>
        <Headers>
          <RulerTools $xs={[737, 766, 793]} $x0={501} $h={38}>
            <Svg w={18} h={22} sw={1.8} dy={-1}><path d="M6 3h5l5 18H2L6 3zM2 1l9 17" /></Svg>
            <Svg w={20} h={22} sw={1.7} dy={-1}><circle cx="10" cy="8" r="5" /><path d="M10 1v2M7 1h6M10 8l3-3M2 18h16M5 15l-3 3 3 3M15 15l3 3-3 3" /></Svg>
            <ToolSlot $w={32} $on $h={33}><Svg w={18} h={19} c={blue} sw={5} dy={-1}><path d="M3.5 19v-7a5.5 6 0 1 1 11 0v7" /><path d="M0 15h7M11 15h7" stroke="#161616" strokeWidth="1.2" /></Svg></ToolSlot>
          </RulerTools>
          <TrackHead $h={208} />
          <TrackHead $h={201} $bt={0}>
            <TrackTag $c="#807a4c" $j="flex-end" $p="0 0 6px"><Swatch /></TrackTag>
            <TrackBody>
              <Gap $h={7} /><SendBox $h={151} />
              <Strip $xs={[528, 552]} $x0={521} $h={38}><Chevron c="#c0c0c0" dy={-1} /><ReadBox>读取<Down c="#444" /></ReadBox></Strip>
            </TrackBody>
            <Meter $h={187} $mt={4} $lit />
          </TrackHead>
          <TrackHead $h={76} $bt={4}>
            <TrackTag $c="#4b7a69" $p="9px 0 0"><Dots /></TrackTag>
            <TrackBody>
              <Strip $xs={[532, 563, 709, 743, 776, 811]} $x0={521} $h={48}>
                <WaveIcon /><Label $c="#999">轨道 <Latin>3</Latin></Label><MsrLabel>M</MsrLabel><MsrLabel>S</MsrLabel><MsrLabel>R</MsrLabel><MsrLabel $c="#4c4c4c">I</MsrLabel>
              </Strip>
              <Strip $xs={[527, 557, 592, 653, 683, 718, 770]} $x0={521} $h={22} $mt={-2}>
                <Svg w={24} h={22} sw={1.6} dy={-1}><path d="M1 22v-3M4 22v-4M7 22v-5M10 22v-7M13 22v-9M16 22v-11M19 22V8M22.5 22V0" /></Svg>
                <Knob /><Label $dy={-0.5} $c={blue}><Latin $s={17}>+0</Latin></Label>
                <Svg w={24} h={20} sw={1.6} dy={-1}><path d="M1 0v20M4 2v16M7 4v12M10 7v6M14 7v6M17 4v12M20 2v16M23 0v20" /></Svg>
                <Knob /><Label $dy={-0.5} $c={blue}><Latin $s={17}>0</Latin></Label>
                <Svg w={24} h={16} sw={1.6}><circle cx="12" cy="8" r="2.5" fill={icon} /><path d="M7 3q-3 5 0 10M3 0q-5 8 0 16M17 3q3 5 0 10M21 0q5 8 0 16" /></Svg>
              </Strip>
            </TrackBody>
            <Meter $h={24} $mt={52} />
          </TrackHead>
          <Rule />
        </Headers>
        <Lanes>
          <Ruler>
            <svg width="691" height="38" fill={grey}>
              {[1, 191, 382, 572].map((x) => <rect key={x} x={x} y="24" width="2" height="14" />)}
              {[96, 286, 477, 667].map((x) => <rect key={x} x={x} y="29" width="2" height="9" />)}
              <g fontFamily={UI} fontSize="16.5"><text x="3" y="18">hms</text><text x="176" y="18">1:00</text><text x="366" y="18">2:00</text><text x="557" y="18">3:00</text></g>
            </svg>
          </Ruler>
          <ClipBar><ClipName><Tofu c="#fff" n={6} w={7.6} h={12} />(Skyline) - Billkin 48000 1</ClipName><VolTag>音量<Svg w={11} h={9} fill="#fff"><path d="M0 0h11L5.5 9z" /></Svg></VolTag></ClipBar>
          <Clip>
            <svg width="691" height="180">
              <path d={WAVE_A} stroke="#48de9b" strokeWidth="1.05" />
              <path d={WAVE_B} stroke="#48de9b" strokeWidth="1.05" />
              <path d="M0 43.5h691M0 133.5h691" stroke="#5cd792" />
              <rect y="64" width="691" height="3" fill="#eef5a5" />
              <rect y="88" width="691" height="4" fill="#708594" /><rect y="88" width="691" height="1" fill="#98a6ae" />
              <rect x="657" y="3" width="18" height="18" fill="#9b9b9b" /><path d="M658 5v14h15z" fill="#444" />
              <path d="M678 180l12-12M683 180l7-7M687 180l3-3" stroke="#48de9b" strokeWidth="1.6" />
            </svg>
          </Clip>
          <Lane $h={206} /><Lane $h={76} />
          <Rule />
        </Lanes>
        <MapCol>
          <MapTrack>{segs.map(([h, c], i) => <MapSeg key={i} $h={h} $c={c} />)}</MapTrack>
          <MapFrame /><MapCap $t={38} /><MapCap $t={201} />
        </MapCol>
        <StartLine />
        <Marker $l={337} $o={0.55} width="17" height="18"><path d="M0 0h17v9l-8.5 9L0 9z" fill={blue} /></Marker>
        <Marker $l={418} width="17" height="18"><path d="M0 0h17v9l-8.5 9L0 9z" fill={blue} /><path d="M8 12v6" stroke="#123" /></Marker>
        <Playhead />
      </EditorGrid>
      <Strip $xs={[507, 721, 765, 810, 851, 894, 936, 985, 1029, 1070, 1112, 1181, 1225, 1269, 1314, 1357, 1401, 1448, 1486, 1534]} $x0={491} $h={50}>
        <TimeCode>0:25.762</TimeCode>
        <Svg w={14} h={14} fill={icon}><path d="M0 0h14v14H0z" /></Svg>
        <Play c="#159a15" />
        <Svg w={13} h={14} fill="#f7c600"><path d="M0 0h5v14H0zM8 0h5v14H8z" /></Svg>
        <Svg w={17} h={14} fill={icon}><path d="M0 0h3v14H0zM17 0v14L5 7z" /></Svg>
        <Svg w={24} h={12} fill={icon}><path d="M12 0v12L0 6zM24 0v12L12 6z" /></Svg>
        <Svg w={24} h={12} fill={icon}><path d="M0 0v12l12-6zM12 0v12l12-6z" /></Svg>
        <Svg w={17} h={14} fill={icon}><path d="M14 0h3v14h-3zM0 0v14l12-7z" /></Svg>
        <Svg w={15} h={15} fill="#f33b3b"><circle cx="7.5" cy="7.5" r="7.5" /></Svg>
        <Loop />
        <Svg w={25} h={16} c={off}><path d="M7 0v4L4 8l3 4v4M11 0v4l3 4-3 4v4M0 8h4M13 8h7" /><path d="M18 3l7 5-7 5z" fill={off} stroke="none" /></Svg>
        <Svg w={26} h={25}><path d="M4 2v22M1 4l3-3 3 3M1 21l3 3 3-3" strokeWidth="1.7" /><ZoomGlyph x={7} y={2} sign="+" /></Svg>
        <Svg w={26} h={25}><path d="M4 2v22M1 4l3-3 3 3M1 21l3 3 3-3" strokeWidth="1.7" /><ZoomGlyph x={7} y={2} sign="-" /></Svg>
        <Svg w={26} h={25}><path d="M1 3h24M4 0L1 3l3 3M22 0l3 3-3 3" strokeWidth="1.7" /><ZoomGlyph x={7} y={5} sign="+" /></Svg>
        <Svg w={26} h={25}><path d="M1 3h24M4 0L1 3l3 3M22 0l3 3-3 3" strokeWidth="1.7" /><ZoomGlyph x={7} y={5} sign="-" /></Svg>
        <ZoomAll />
        <Svg w={30} h={25}><path d="M5 6q-2 0-2 4t-2 4q2 0 2 4t2 4" strokeWidth="1.6" /><ZoomGlyph x={12} y={4} /></Svg>
        <Svg w={27} h={25}><path d="M1 6q2 0 2 4t3 4q-3 0-3 4t-2 4" strokeWidth="1.6" /><ZoomGlyph x={8} y={4} /></Svg>
        <Svg w={33} h={25}><path d="M5 6q-2 0-2 4t-2 4q2 0 2 4t2 4M8 6q2 0 2 4t3 4q-3 0-3 4t-2 4" strokeWidth="1.6" /><ZoomGlyph x={14} y={4} /></Svg>
        <Svg w={26} h={25}><path d="M0 1h8M0 24h8M4 2v21M1 7l3-4 3 4M1 18l3 4 3-4" strokeWidth="1.7" /><ZoomGlyph x={8} y={3} sign="+" /></Svg>
      </Strip>
    </Panel>
  );
}

function SoundPanel() {
  const types = [
    ['对话', <Svg w={23} h={23} fill={icon} dy={1}><path d="M3 0h17q3 0 3 3v9q0 3-3 3h-7l-6 7v-7H3q-3 0-3-3V3q0-3 3-3z" /></Svg>],
    ['音乐', <Svg w={24} h={22} fill={icon}><path d="M9 0l14 4v14q-1 4-5 4t-4-3q1-4 7-3V8L11.500 5.500V15q-1 4-5 4t-4-3q0-3 6.500-4V0z" /></Svg>],
    ['SFX', <Svg w={25} h={23} fill={icon}><path d="M11 0l2 7 6-4-2 6 8 1-7 3 6 5-8-2-1 3-3 4-2-7-6 4 2-6-6-3 7-2-5-6 7 4z" /></Svg>],
    ['环境', <Svg w={24} h={24}><path d="M1 10Q3 2 11 1M6 11q1-4 6-5" strokeWidth="2.5" /><path d="M20 4l3 0v8q-1 10-15 12 1-13 12-16z" fill={icon} stroke="none" /><path d="M19 10l-6 8" stroke="#1c1c1c" strokeWidth="1.6" /></Svg>],
  ];
  return (
    <Panel $w={342} $h={701}>
      <Strip $xs={[1595, 1681]} $x0={1576} $h={36} $mt={2}><Label $dy={0.3} $c="#b8b8b8">基本声音</Label><Burger /></Strip>
      <Rule $m="4px 0 0" />
      <Strip $xs={[1592]} $x0={1576} $h={46}><Label $dy={0.5}><Tofu /><Latin $ls={0.05}>(Skyline) - Billkin 48000 1</Latin></Label></Strip>
      <Rule $m="-1px 0 0" />
      <Strip $xs={[1593, 1646]} $x0={1576} $h={48}><Label $dy={-0.3}>预设 :</Label><Preset $w={256}><span /><Down /></Preset></Strip>
      <Gap $h={3} /><Rule /><Gap $h={45} /><Rule />
      <Strip $xs={[1608]} $x0={1576} $h={30} $mt={32}><Label $dy={-0.3}>向选择项指定音频类型 :</Label></Strip>
      <Gap $h={14} />
      {types.map(([t, g]) => (
        <TypeButton key={t}><span />{g}<Label>{t === 'SFX' ? <Latin>SFX</Latin> : t}</Label><Svg w={7} h={16} sw={1.6}><path d="M1 0l5 8-5 8" /></Svg></TypeButton>
      ))}
    </Panel>
  );
}

function Levels() {
  const marks = Array.from({ length: 21 }, (_, i) => (i === 0 ? 'dB' : i === 20 ? '0' : String(-60 + i * 3)));
  return (
    <Panel $w={1012} $h={174}>
      <Strip $xs={[511, 560]} $x0={491} $h={36} $mt={3}><Label $dy={-0.3} $c="#aaa">电平</Label><Burger /></Strip>
      <LevelBox>
        <Level><Bar $w={681} $c="#39f245" /><Bar $w={156} $c="#f5d147" /><Bar $w={1.5} $ml={73.5} $c="#e8dc20" /><Bar $w={2} $ml={66} $c="#000" /></Level>
        <Level><Bar $w={681} $c="#39f245" /><Bar $w={196} $c="#f5d147" /><Bar $w={7} $c="#f64545" /><Bar $w={1.5} $ml={26.5} $c="#e8dc20" /><Bar $w={2} $ml={66} $c="#000" /></Level>
      </LevelBox>
      <Scale>{marks.map((m, i) => <Mark key={m} $first={i === 0} $last={i === 20}>{m}</Mark>)}</Scale>
    </Panel>
  );
}

function Selection() {
  return (
    <Panel $w={409} $h={174}>
      <Strip $xs={[1528, 1629]} $x0={1509} $h={36} $mt={2}><Label $c="#b0b0b0">选区 / 视图</Label><Burger /></Strip>
      <Strip $xs={[1597, 1704, 1811]} $x0={1509} $h={30} $mt={6}><Label $dy={0.5}>开始</Label><Label $dy={0.5}>结束</Label><Label $dy={0.5}>持续时间</Label></Strip>
      <Figures $xs={[1526, 1599, 1706, 1812]} $x0={1509} $h={30} $mt={4}><Label $c={grey}>选区</Label><Label><Latin>0:00.000</Latin></Label><Label><Latin>0:00.000</Latin></Label><Label><Latin>0:00.000</Latin></Label></Figures>
      <Figures $xs={[1526, 1599, 1706, 1812]} $x0={1509} $h={30} $mt={3}><Label $c={grey}>视图</Label><Label><Latin>0:00.000</Latin></Label><Label><Latin>3:37.835</Latin></Label><Label><Latin>3:37.835</Latin></Label></Figures>
    </Panel>
  );
}

function Menus() {
  return (
    <>
      <Popup $l={428} $t={206} $w={202} $h={423} $z={3}>
        <Item $pl={41} $off>编辑效果</Item><Item $pl={41} $off>移除效果</Item>
        <Sep $m="3px 0 3px 38px" />
        <Item $pl={41} $on $mr={3}>振幅与压限<MenuArrow /></Item>
        {mainMenu.map((m) => <Item key={m} $pl={41} $pr={10}>{m}<MenuArrow /></Item>)}
        <Sep $m="3px 0 3px 38px" />
        <Item $pl={41} $pr={10}>VST<MenuArrow /></Item><Item $pl={41} $pr={10}>VST3<MenuArrow /></Item>
      </Popup>
      <Popup $l={625} $t={275} $w={267} $h={316} $z={4}>
        {subMenu.map((m, i) => <Item key={m} $pl={39} $on={i === 5}>{m}</Item>)}
      </Popup>
    </>
  );
}

function Ime() {
  return (
    <>
      <ImeBar>
        <ImeRow $xs={[1661, 1697, 1725, 1761, 1791, 1827, 1859, 1892]} $x0={1630} $h={37}>
          <Label $dy={1}>英</Label>
          <Svg w={14} h={20} fill="#1f7bd0"><circle cx="4" cy="5" r="3" /><path d="M8 10q6-2 6 3 0 4-5 7 2-4 2-5-3 0-3-5z" /></Svg>
          <Svg w={24} h={24} c="#1f7bd0" sw={2.6}><circle cx="12" cy="12" r="10.5" /><path d="M6.5 13q5.5 8 11 0M8.5 6v4M15.5 6v4" /></Svg>
          <Svg w={19} h={26} c="#1f7bd0" sw={2.4}><rect x="5" y="1" width="9" height="15" rx="4.5" fill="#1f7bd0" stroke="none" /><path d="M1.5 11q0 9 8 9t8-9M9.5 20v5M5 25h9" /></Svg>
          <Svg w={24} h={19} c="#1f7bd0" sw={2.4}><rect x="1.2" y="1.2" width="21.6" height="16.6" rx="2" /><path d="M5 6h14M5 10h14" strokeDasharray="2.5 1.5" /><path d="M6 14.5h12" strokeWidth="1.8" /></Svg>
          <Svg w={27} h={24} fill="#b5bfd4"><circle cx="9" cy="6" r="5.5" /><path d="M0 24v-5q1-6 9-7 3 0 4 1l-6 5v6z" /><path d="M9 14h8v2h-5v2h5v6H9v-6h5v-2H9zM18 14h8v2h-6v2h6v6h-8z" opacity=".9" /></Svg>
          <Svg w={21} h={21} fill="#1f7bd0"><path d="M6 0q4.5 4 9 0l6 4-2 6-3-1v12H5V9l-3 1-2-6z" /></Svg>
          <Svg w={21} h={20} fill="#1f7bd0"><rect width="9" height="9" rx="1.5" /><rect y="11" width="9" height="9" rx="1.5" /><rect x="11" y="11" width="9" height="9" rx="1.5" /><path fillRule="evenodd" d="M12 0h7q1 0 1 1v7q0 1-1 1h-7q-1 0-1-1V1q0-1 1-1zM13.5 2v5h4V2z" /></Svg>
        </ImeRow>
      </ImeBar>
      <SLogo $w={38} $h={38} $float>S</SLogo>
    </>
  );
}

function Taskbar() {
  return (
    <TaskBar>
      <StartCell><Svg w={24} h={24} fill="#fff"><path d="M0 3.5l10-1.5v9.5H0zM11.2 1.8L24 0v11.5H11.2zM0 12.6h10V22L0 20.6zM11.2 12.6H24V24l-12.8-1.8z" /></Svg></StartCell>
      <SearchBox><Svg w={24} h={25} c="#222" sw={2}><circle cx="15.5" cy="9" r="8" /><path d="M10 15L1 24" /></Svg>在这里输入你要搜索的内容</SearchBox>
      <AppCell $w={72}><Svg w={24} h={24} c="#fff" sw={3}><circle cx="12" cy="12" r="9.5" /></Svg></AppCell>
      <AppCell $w={72}><Svg w={24} h={24} c="#fff" sw={1.4}><path d="M1 0v4h15V0M1 7.5h15v9.5H1zM1 24v-3.5h15V24M22.5 0v5M22.5 12v12" /><path d="M21 7h3v3h-3z" fill="#fff" stroke="none" /></Svg></AppCell>
      <AppCell $w={61} $ml={11} $run><Svg w={34} h={28} fill="#fff"><path d="M0 2q0-1 1-1h12l2 3H0z" fill="#d99b0c" /><path d="M0 5h15l2-2h14q1 0 1 1v21q0 1-1 1H1q-1 0-1-1z" fill="#fbd35f" /><path d="M6 27V16q0-1.5 1.5-1.5h17q1.5 0 1.5 1.5v11h-5v-7H11v7z" fill="#3f97d9" /></Svg></AppCell>
      <AppCell $w={80} $ml={4}><Svg w={32} h={32} fill="#fff"><circle cx="16" cy="16" r="16" fill="#169e57" /><path d="M2.1 8A16 16 0 0 1 29.9 8L16 9z" fill="#db4437" /><path d="M2.1 8L9 20l7-11z" fill="#db4437" /><path d="M29.9 8A16 16 0 0 1 16 32l7-12V8.8H16z" fill="#ffcd40" /><circle cx="16" cy="16" r="7.5" /><circle cx="16" cy="16" r="6" fill="#4285f4" /></Svg></AppCell>
      <AppCell $w={70}><Svg w={32} h={32} fill="#ffd900"><path d="M0 0h32v16L16 32H0z" /><path d="M16 16h16L16 31z" fill="#4a4a4a" /><path d="M32 17v15H17z" fill="#f7a800" /></Svg></AppCell>
      <AppCell $w={61} $ml={10} $run><Svg w={33} h={32} fill="#fff"><rect width="32" height="32" rx="4" /><circle cx="14" cy="17" r="12" fill="#ffdc00" /><path d="M24 8Q18 2 10 7T6 20q3 9 12 8 8-2 11-12H12l12-5M14 20l6-11" fill="none" stroke="#111" strokeWidth="1.8" /></Svg></AppCell>
      <AppCell $w={73} $ml={8} $on $run><AuBadge $s={34} $b={2} $f={20} $mt={-2} $ml={-1}>Au</AuBadge></AppCell>
      <Tray $xs={[1355, 1390, 1424, 1464, 1504, 1543, 1587, 1629, 1858, 1913]} $x0={1110} $h={60}>
        <Svg w={18} h={11} c="#fff" sw={1.5}><path d="M1 10l8-9 8 9" /></Svg>
        <Svg w={20} h={24} fill="#000"><ellipse cx="10" cy="12" rx="9" ry="11" /><ellipse cx="10" cy="16" rx="6" ry="7" fill="#fff" /><path d="M2 12q8 3 16 0v3q-8 3-16 0zM13 1l5-1-1 5z" fill="#f0c" /><path d="M7 5h2v3H7zM11 5h2v3h-2z" fill="#fff" /><path d="M5 9h10l-5 2zM4 22h5v2H4zM11 22h5v2h-5z" fill="#f90" /></Svg>
        <Svg w={24} h={22} fill="#19c5ee"><path d="M0 0h24v17H0zM10 17h4v3h4v2H6v-2h4z" /><path d="M10 3h4v4h-4z" fill="#ffe13a" /><path d="M16 3h5v4h-5z" fill="#fff" /><path d="M16 9h5v5h-5z" fill="#9be01e" /></Svg>
        <Svg w={20} h={20} c="#ddd" sw={1.5}><path d="M1 20Q1 2 19 2M6 20Q6 7 19 7M11 20q0-8 8-8" /><circle cx="17" cy="18" r="1.5" fill="#ddd" /></Svg>
        <Svg w={21} h={20} c="#eee" sw={1.4}><path d="M7 14L13 2q2-2 3 0t-1 3L9 17l-3 1zM7 9q-6 1-6 5t5 4M12 14q8 2 8-3 0-3-4-2" /></Svg>
        <Label $s={24}>英</Label>
        <SLogo $w={21} $h={21}>S</SLogo>
        <Clock>23:44:52 星期三<br />2021年1月6日 冬月廿三</Clock>
        <Svg w={24} h={22} fill="#fff" dy={-2}><path d="M0 0h24v18h-9l-4 5v-5H0z" /><path d="M5 5h14v1.5H5zM5 9h14v1.5H5zM5 13h9v1.5H5z" fill="#24232c" /></Svg>
        <VRule $h={60} $w={1} $c="#77767c" />
      </Tray>
    </TaskBar>
  );
}

export default function App() {
  return (
    <Screen>
      <Global />
      <TopBars />
      <Main>
        <Column $w={483}><FilesPanel /><RackPanel /><HistoryPanel /></Column>
        <Column $w={1427}>
          <Line><Editor /><SoundPanel /></Line>
          <Line><Levels /><Selection /></Line>
        </Column>
      </Main>
      <StatusBar $xs={[13, 971, 1045, 1226, 1240, 1529, 1543, 1620, 1647, 1718, 1732, 1847]} $x0={1} $h={30}>
        <Label>多轨会话备份保存已完成，用时 <Latin>0.02</Latin> 秒</Label><VRule /><VRule /><VRule />
        <Label><Latin>48000 Hz<Bullet />32</Latin> 位混合</Label><VRule /><Label><Latin>83.87 MB</Latin></Label><VRule />
        <Label><Latin>3:49.022</Latin></Label><VRule /><Label><Latin>24.90 GB</Latin> 空闲</Label><VRule />
      </StatusBar>
      <Taskbar />
      <Badge>4</Badge>
      <Menus />
      <Ime />
    </Screen>
  );
}
